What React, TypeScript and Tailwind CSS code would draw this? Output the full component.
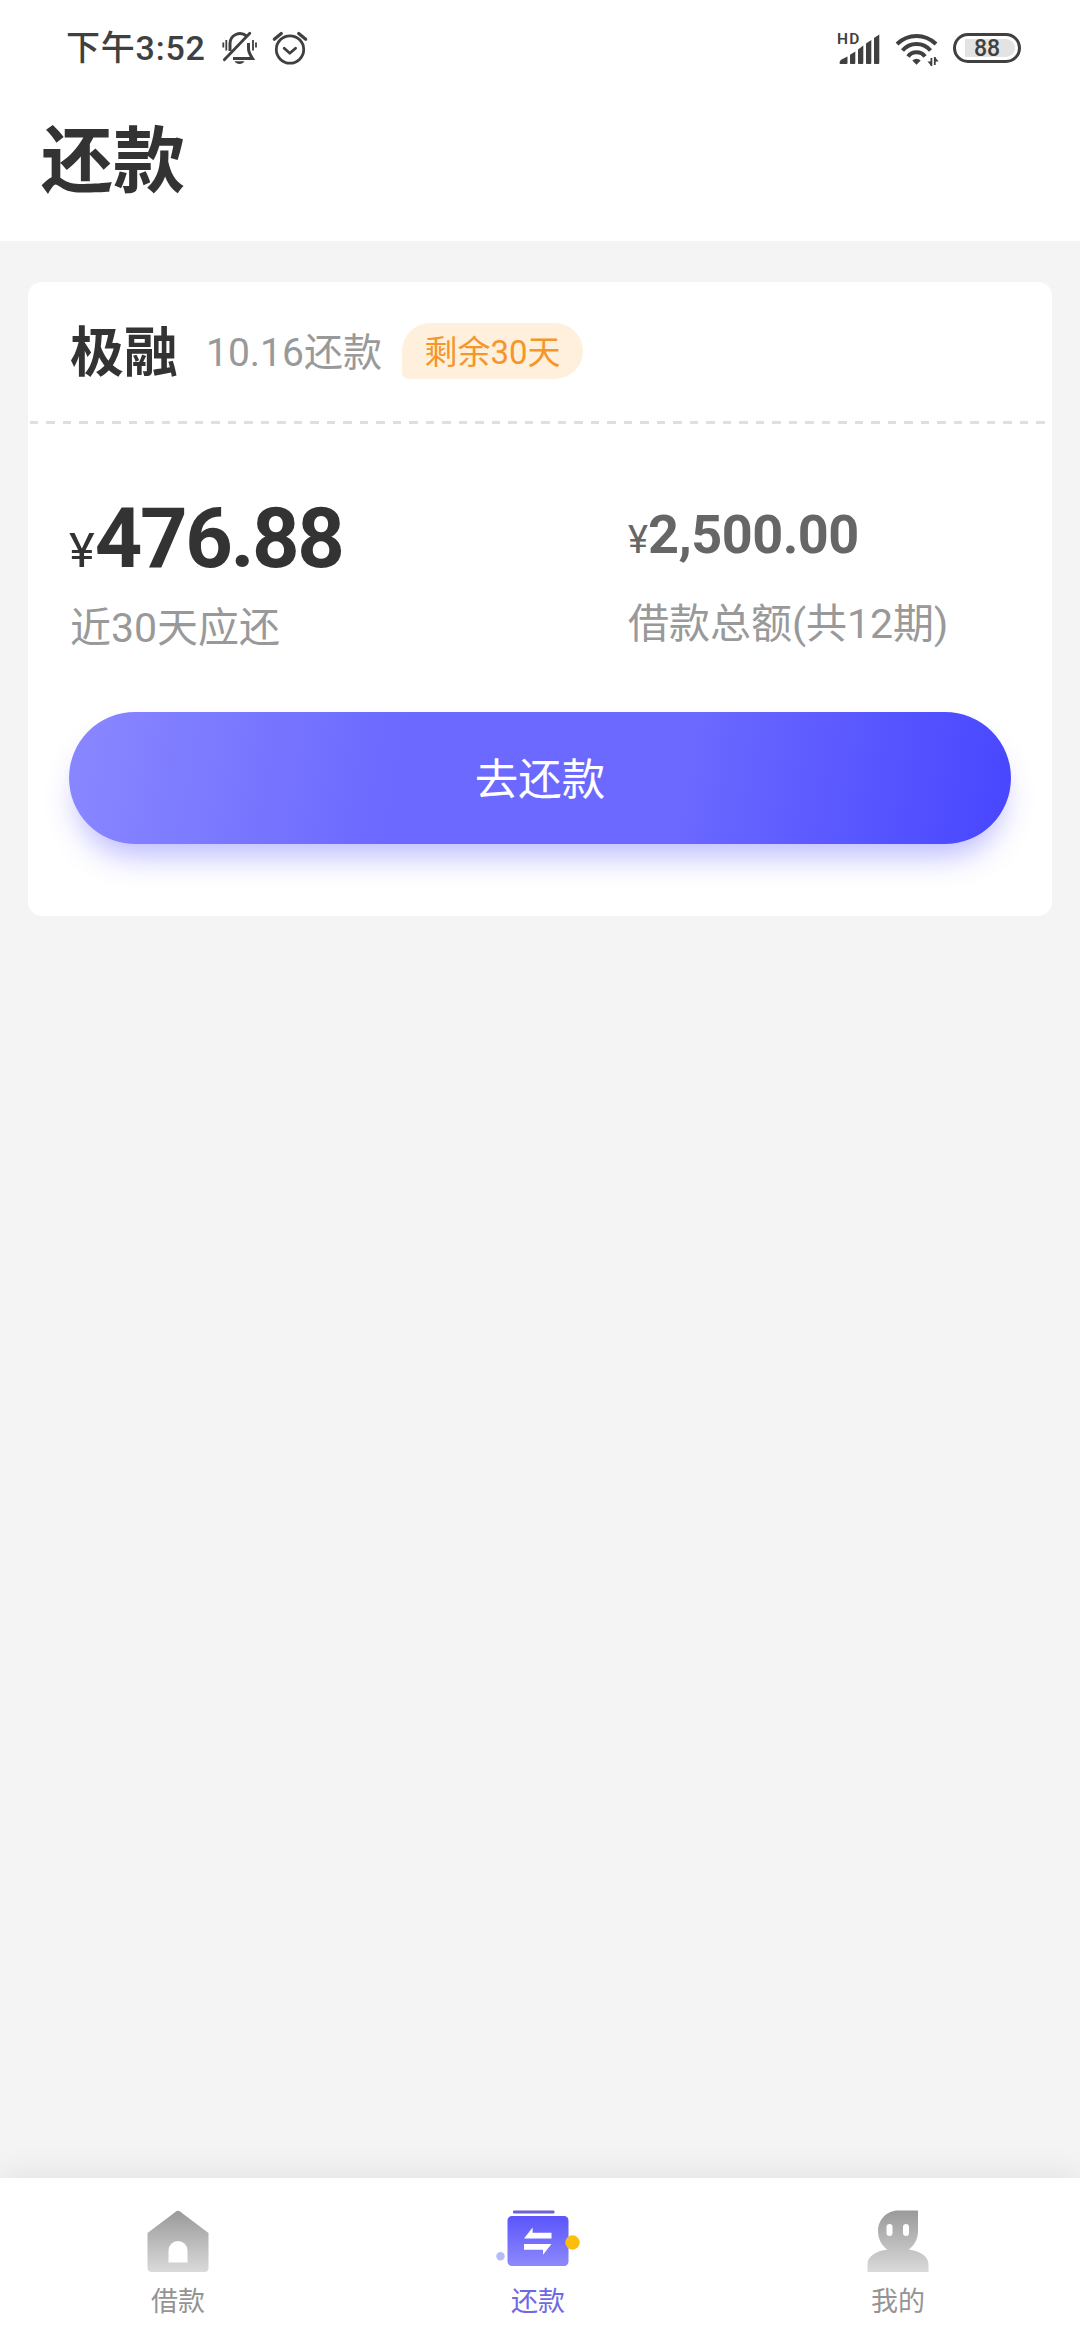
import type { ReactNode } from "react";

function MutedBellIcon() {
  return (
    <svg width="36" height="34" viewBox="0 0 36 34" fill="none" stroke="#404040">
      <path d="M8 20V12.500a10 10 0 0 1 16.500-7.500" strokeWidth="3" />
      <path d="M26.500 12v5.500c0 4 1.500 6 4 10H11" strokeWidth="3" />
      <path d="M2.300 28.800 27.800 2.300" strokeWidth="2.800" strokeLinecap="round" />
      <path d="M12.500 30.300h10c-1 1.800-3 2.700-5 2.700s-4-.9-5-2.700Z" fill="#404040" stroke="none" />
      <path d="M4.300 9v10.500M1.300 11.500v5M31 9v10.500M34 11.500v5" strokeWidth="1.800" />
    </svg>
  );
}

function AlarmIcon() {
  return (
    <svg width="36" height="36" viewBox="0 0 36 36" fill="none" stroke="#404040" strokeLinecap="round" strokeLinejoin="round">
      <circle cx="18" cy="19.500" r="13.700" strokeWidth="2.800" />
      <path d="M12.200 18.200 17.800 23.200 23.600 18.200" strokeWidth="2.800" />
      <path d="M2.300 9.300 9.300 3.500M33.700 9.300 26.700 3.500" strokeWidth="3.200" />
    </svg>
  );
}

function SignalIcon() {
  return (
    <svg width="42" height="36" viewBox="0 0 42 36" fill="#404040" overflow="visible">
      <text x="-1" y="14.300" fontFamily="Roboto, sans-serif" fontSize="15.500" fontWeight="600" letterSpacing="1.200">
        HD
      </text>
      <path d="M1.500 33Q1.500 30.500 3.500 29.500L9.500 26.500V33Q9.500 34 8.500 34H2.500Q1.500 34 1.500 33Z" />
      <path d="M12 24.800 17.300 21.600V33a1 1 0 0 1-1 1H13a1 1 0 0 1-1-1Z" />
      <path d="M20 19.500 25.300 15.500V33a1 1 0 0 1-1 1H21a1 1 0 0 1-1-1Z" />
      <path d="M28 13.500 33.300 10V33a1 1 0 0 1-1 1H29a1 1 0 0 1-1-1Z" />
      <path d="M36 8 41.300 4.500V33a1 1 0 0 1-1 1H37a1 1 0 0 1-1-1Z" />
    </svg>
  );
}

function WifiIcon() {
  return (
    <svg width="44" height="36" viewBox="0 0 44 36" fill="none" stroke="#404040" strokeWidth="4">
      <path d="M2 14Q10.500 6 21.500 6T41 14" />
      <path d="M7.500 20.500Q13 14 21.500 14T35.500 20.500" />
      <path d="M13 26.500Q16 22.300 21.500 22.300T30 26.500" />
      <path d="M17.300 30.500Q21.500 26.800 25.700 30.500L21.500 34.800Z" fill="#404040" stroke="none" />
      <path d="M36.400 28V36M39.800 27V35" strokeWidth="1.800" />
      <path d="M32.500 31.500H36.400V36ZM43.700 31.500H39.800V27Z" fill="#404040" stroke="none" />
    </svg>
  );
}

function Battery() {
  return (
    <div className="flex h-[30px] w-[68px] items-center justify-center rounded-full border-[3px] border-[#404040]">
      <div className="ml-[6px] flex h-[18px] w-[50px] items-center rounded-r-full bg-[#e3e3e3] pl-[9px] text-[23px] font-medium leading-none">
        88
      </div>
    </div>
  );
}

function StatusBar() {
  return (
    <div className="flex h-[96px] items-center pl-[66px] pr-[59px] text-[#404040]">
      <span className="text-[34px] font-medium leading-[40px] tracking-[0.8px]">下午3:52</span>
      <div className="ml-[16px]">
        <MutedBellIcon />
      </div>
      <div className="ml-[14px]">
        <AlarmIcon />
      </div>
      <div className="ml-auto">
        <SignalIcon />
      </div>
      <div className="ml-[15px]">
        <WifiIcon />
      </div>
      <div className="ml-[14px]">
        <Battery />
      </div>
    </div>
  );
}

function RepaymentCard() {
  return (
    <section className="mx-[28px] mt-[41px] h-[634px] rounded-[14px] bg-white">
      <div className="flex h-[139px] items-center pl-[42px]">
        <h2 className="pt-[5px] text-[54px] font-bold leading-[60px] text-[#333333]">极融</h2>
        <span className="ml-[28px] pt-[3px] text-[39px] leading-[48px] text-[#999999]">10.16还款</span>
        <span className="mb-[2px] ml-[20px] flex h-[56px] w-[181px] items-center justify-center rounded-[28px] rounded-bl-[6px] bg-[#fff0de] pt-[3px] text-[33px] leading-none text-[#f5962a]">
          剩余30天
        </span>
      </div>
      <div className="ml-[2px] mr-[6px] h-[3px] bg-[repeating-linear-gradient(90deg,#dfdfdf_0_8.300px,transparent_8.300px_16.500px)]" />
      <div className="flex h-[288px] pl-[42px]">
        <div className="w-[558px] pt-[70px]">
          <div className="flex items-baseline leading-[90px] text-[#333333]">
            <span className="-ml-px text-[49px]">¥</span>
            <span className="text-[83px] font-bold tracking-[-2.4px]">476.88</span>
          </div>
          <p className="mt-[8px] text-[41px] leading-[48px] text-[#999999]">近30天应还</p>
        </div>
        <div className="pt-[66px]">
          <div className="flex items-baseline leading-[90px] text-[#666666]">
            <span className="text-[38px]">¥</span>
            <span className="text-[54px] font-bold tracking-[-0.5px]">2,500.00</span>
          </div>
          <p className="mt-[15px] text-[41px] leading-[48px] text-[#999999]">借款总额(共12期)</p>
        </div>
      </div>
      <button className="mx-[41px] block h-[132px] w-[942px] rounded-full bg-[linear-gradient(100deg,#8886ff_2%,#6b69ff_35%,#6b69ff_65%,#4a48ff_98%)] pt-[5px] text-[43.500px] leading-none text-white shadow-[0_20px_30px_-8px_rgba(107,105,255,0.45)]">
        去还款
      </button>
    </section>
  );
}

function HomeIcon() {
  return (
    <svg width="84" height="64" viewBox="0 0 84 64">
      <defs>
        <linearGradient id="home" x1="0" y1="0" x2="0" y2="1">
          <stop offset="0" stopColor="#999999" />
          <stop offset="1" stopColor="#dadada" />
        </linearGradient>
      </defs>
      <path
        d="M40 1.400Q42 0 44 1.400L72.500 23V58Q72.500 62 68.500 62H15.500Q11.500 62 11.500 58V23Z"
        fill="url(#home)"
      />
      <path d="M32.500 52.500V40.500a9.500 9.500 0 0 1 19 0V52.500Z" fill="#fff" />
    </svg>
  );
}

function RepayIcon() {
  return (
    <svg width="84" height="64" viewBox="0 0 84 64">
      <defs>
        <linearGradient id="repay" x1="0" y1="0" x2="0" y2="1">
          <stop offset="0" stopColor="#5b55fb" />
          <stop offset="1" stopColor="#8d89fb" />
        </linearGradient>
      </defs>
      <rect x="17" y="0.500" width="41.500" height="3" rx="1" fill="#6a63d0" />
      <rect x="11.500" y="6" width="61" height="50" rx="4.500" fill="url(#repay)" />
      <path d="M28 28.500 36.600 17.500V22.700H55.500V28.500ZM55.500 34 47 44.700V39.800H28V34Z" fill="#fff" />
      <circle cx="4.500" cy="46.300" r="4.200" fill="#b6bcfa" />
      <circle cx="76.500" cy="32.500" r="7.200" fill="#fcbe09" />
    </svg>
  );
}

function ProfileIcon() {
  return (
    <svg width="84" height="64" viewBox="0 0 84 64">
      <defs>
        <linearGradient id="profile" x1="0" y1="0" x2="0" y2="62" gradientUnits="userSpaceOnUse">
          <stop offset="0" stopColor="#999999" />
          <stop offset="1" stopColor="#dadada" />
        </linearGradient>
      </defs>
      <path
        d="M42 0.500H62V21C62 29 58.500 35.500 52.500 39.500C64 41 72.500 46.500 72.500 54V62H11.500V54C11.500 46.500 20 41 31.500 39.500C25.500 35.500 22 29 22 21C22 9.500 31 0.500 42 0.500Z"
        fill="url(#profile)"
      />
      <rect x="30.500" y="14" width="6" height="12" rx="3" fill="#fff" />
      <rect x="47" y="14" width="6" height="12" rx="3" fill="#fff" />
    </svg>
  );
}

function TabItem({ icon, label, active = false }: { icon: ReactNode; label: string; active?: boolean }) {
  return (
    <div className="flex w-[360px] flex-col items-center pr-[4px] pt-[32px]">
      {icon}
      <span className={active ? "mt-[12px] text-[27px] leading-[32px] text-[#6d69e6]" : "mt-[12px] text-[27px] leading-[32px] text-[#949494]"}>
        {label}
      </span>
    </div>
  );
}

export default function App() {
  return (
    <div className="flex h-[2340px] w-[1080px] flex-col overflow-hidden bg-[#f4f4f4] font-['Roboto','Noto_Sans_CJK_SC',sans-serif]">
      <header className="h-[241px] bg-white">
        <StatusBar />
        <h1 className="pl-[41px] pt-[21px] text-[72px] font-bold leading-[90px] text-[#333333]">还款</h1>
      </header>
      <RepaymentCard />
      <nav className="mt-auto flex h-[162px] bg-white shadow-[0_-4px_30px_rgba(0,0,0,0.08)]">
        <TabItem icon={<HomeIcon />} label="借款" />
        <TabItem icon={<RepayIcon />} label="还款" active />
        <TabItem icon={<ProfileIcon />} label="我的" />
      </nav>
    </div>
  );
}
